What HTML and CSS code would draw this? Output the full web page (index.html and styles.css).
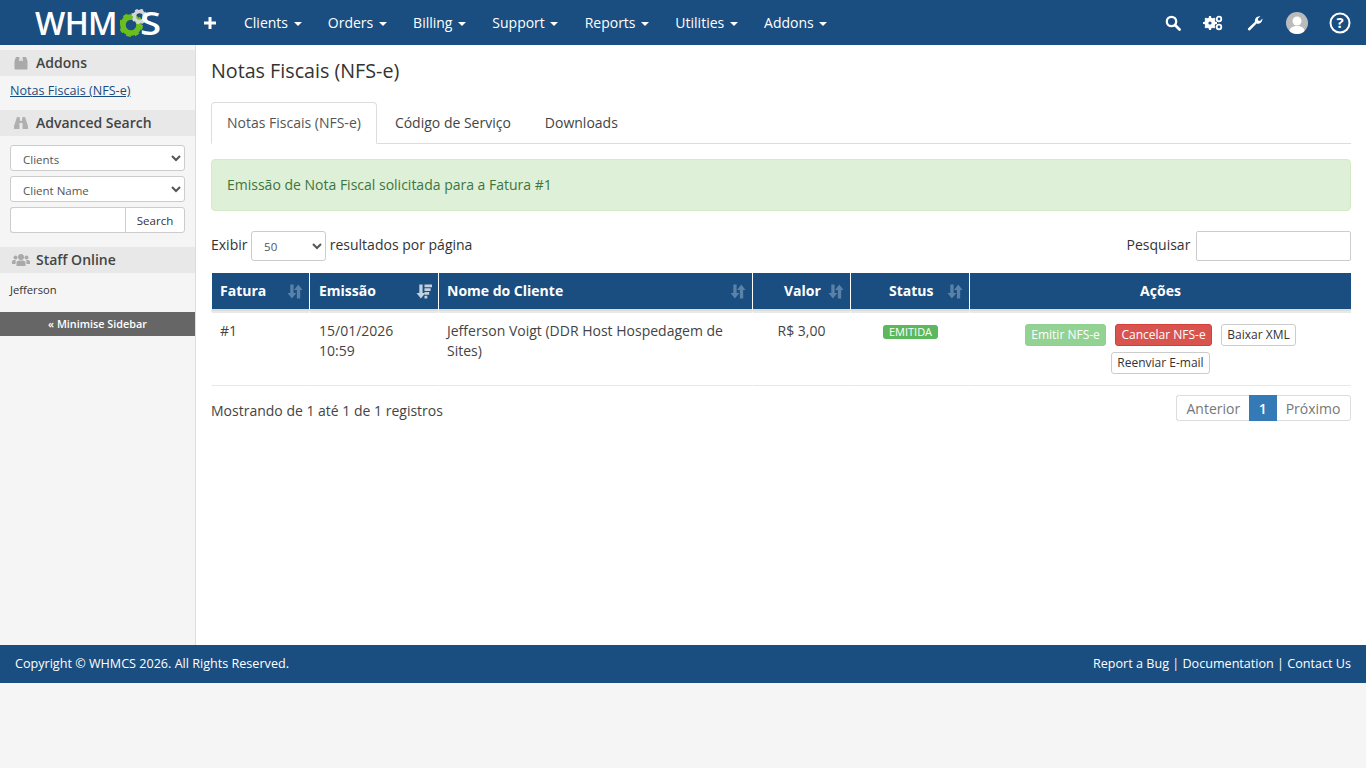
FILE: index.html
```html
<!DOCTYPE html>
<html lang="pt">
<head>
<meta charset="utf-8">
<title>Notas Fiscais (NFS-e)</title>
<link rel="stylesheet" href="styles.css">
</head>
<body>
<header class="topbar">
  <a class="logo" href="#"><span class="logo-whm">WHM</span><svg class="gear" viewBox="0 0 28 28" width="28" height="28"><circle cx="11" cy="16" r="8" fill="none" stroke="#6cbe1e" stroke-width="5.500"/><circle cx="11" cy="16" r="10" fill="none" stroke="#6cbe1e" stroke-width="4" stroke-dasharray="4.300 3.550"/><circle cx="19.500" cy="7.500" r="5" fill="none" stroke="#d5d5d5" stroke-width="3.500"/><circle cx="19.500" cy="7.500" r="6.500" fill="none" stroke="#d5d5d5" stroke-width="2.500" stroke-dasharray="2.800 2.300"/></svg><span class="logo-s">S</span></a>
  <nav class="mainnav">
    <a class="plus" href="#">
      <svg viewBox="0 0 12 12" width="12" height="12"><path d="M4.500 0h3v4.500H12v3H7.500V12h-3V7.500H0v-3h4.500z" fill="#fff"/></svg>
    </a>
    <a href="#">Clients <i class="caret"></i></a>
    <a href="#">Orders <i class="caret"></i></a>
    <a href="#">Billing <i class="caret"></i></a>
    <a href="#">Support <i class="caret"></i></a>
    <a href="#">Reports <i class="caret"></i></a>
    <a href="#">Utilities <i class="caret"></i></a>
    <a href="#">Addons <i class="caret"></i></a>
  </nav>
  <div class="tools">
    <svg class="ic-search" viewBox="0 0 16 16" width="16" height="16"><circle cx="6.500" cy="6.500" r="4.700" fill="none" stroke="#fff" stroke-width="2.300"/><path d="M10 10l4.500 4.500" stroke="#fff" stroke-width="2.800" stroke-linecap="round"/></svg>
    <svg class="ic-cogs" viewBox="0 0 20 16" width="20" height="16"><circle cx="7" cy="8" r="4" fill="none" stroke="#fff" stroke-width="3.200"/><path d="M7 1v14M0 8h14M2.200 3.200l9.600 9.600M11.800 3.200l-9.600 9.600" stroke="#fff" stroke-width="2.200"/><circle cx="7" cy="8" r="1.600" fill="#1a4d80"/><circle cx="16" cy="4" r="2.300" fill="none" stroke="#fff" stroke-width="1.800"/><circle cx="16" cy="12" r="2.300" fill="none" stroke="#fff" stroke-width="1.800"/></svg>
    <svg class="ic-wrench" viewBox="0 0 16 16" width="16" height="16"><path d="M1 13.500L8 6.800C7.300 4 9.500 .8 13.500 1.200L10.800 3.800 11.200 5.500 13 6 15.400 3.400C15.800 7 12.500 9.500 9.600 8.400L3 15.200C2 16 .2 14.500 1 13.500z" fill="#fff"/></svg>
    <span class="avatar"><svg viewBox="0 0 22 22" width="22" height="22"><circle cx="11" cy="9" r="4.500" fill="#fff"/><path d="M3 22c0-6 3-8 8-8s8 2 8 8z" fill="#fff"/></svg></span>
    <svg class="ic-help" viewBox="0 0 22 22" width="22" height="22"><circle cx="11" cy="11" r="9.500" fill="none" stroke="#fff" stroke-width="2"/><text x="11" y="16" text-anchor="middle" class="help-q">?</text></svg>
  </div>
</header>

<div class="layout">
  <aside class="sidebar">
    <h3 class="side-head">
      <svg viewBox="0 0 14 14" width="14" height="14"><path d="M2 1h3.500L5 5H6.500L7 2.500 7.500 5H9L8.500 1H12l1.500 4v7.500c0 .6-.4 1-1 1h-11c-.6 0-1-.4-1-1V5z" fill="#aaa"/></svg>
      Addons
    </h3>
    <div class="side-links"><a href="#">Notas Fiscais (NFS-e)</a></div>
    <h3 class="side-head">
      <svg viewBox="0 0 14 14" width="14" height="14"><path d="M3 1h2.500l.7 4h1.600l.7-4H11l3 9v3H8.500V7h-3v6H0v-3z" fill="#b0b0b0"/></svg>
      Advanced Search
    </h3>
    <form class="side-form">
      <select class="side-select"><option>Clients</option></select>
      <select class="side-select"><option>Client Name</option></select>
      <div class="side-search"><input type="text"><button type="button">Search</button></div>
    </form>
    <h3 class="side-head">
      <svg class="ic-staff" viewBox="0 0 18 14" width="18" height="14"><circle cx="9" cy="4" r="3" fill="#aaa"/><circle cx="3.500" cy="4.500" r="2" fill="#aaa"/><circle cx="14.500" cy="4.500" r="2" fill="#aaa"/><path d="M4.500 13V9.500C4.500 8 6 7.500 9 7.500s4.500.5 4.500 2V13zM0 11V8.500C0 7.500 1 7 3.700 7L3.500 11zM18 11V8.500C18 7.500 17 7 14.300 7l.2 4z" fill="#aaa"/></svg>
      Staff Online
    </h3>
    <div class="staff">Jefferson</div>
    <a class="minimise" href="#">« Minimise Sidebar</a>
  </aside>

  <main class="content">
    <h1>Notas Fiscais (NFS-e)</h1>
    <ul class="tabs">
      <li class="active"><a href="#">Notas Fiscais (NFS-e)</a></li>
      <li><a href="#">Código de Serviço</a></li>
      <li><a href="#">Downloads</a></li>
    </ul>
    <div class="alert">Emissão de Nota Fiscal solicitada para a Fatura #1</div>
    <div class="dt-controls">
      <label class="dt-length">Exibir <select><option>50</option></select> resultados por página</label>
      <label class="dt-filter">Pesquisar <input type="search"></label>
    </div>
    <table class="dt">
      <colgroup>
        <col class="c1"><col class="c2"><col class="c3"><col class="c4"><col class="c5"><col class="c6">
      </colgroup>
      <thead>
        <tr>
          <th><div class="th-in">Fatura<svg class="sort" viewBox="0 0 17 15" width="16" height="15"><path d="M3.500 0H7v9h3l-4.800 6-4.700-6h3zM12 0l4.500 6H14v9h-3.500V6H7.500z" fill="#5a82a8"/></svg></div></th>
          <th class="col-date"><div class="th-in">Emissão<svg class="sort" viewBox="0 0 17 15" width="16" height="15"><path d="M3.500 0H7v9h3l-4.800 6-4.700-6h3z" fill="#c3d0dd"/><path d="M9 0h8v3H9zM9 4h6.500v3H9zM9 8h5v3H9zM9 12h3v3H9z" fill="#c3d0dd"/></svg></div></th>
          <th><div class="th-in">Nome do Cliente<svg class="sort" viewBox="0 0 17 15" width="16" height="15"><path d="M3.500 0H7v9h3l-4.800 6-4.700-6h3zM12 0l4.500 6H14v9h-3.500V6H7.500z" fill="#5a82a8"/></svg></div></th>
          <th><div class="th-in th-right">Valor<svg class="sort" viewBox="0 0 17 15" width="16" height="15"><path d="M3.500 0H7v9h3l-4.800 6-4.700-6h3zM12 0l4.500 6H14v9h-3.500V6H7.500z" fill="#5a82a8"/></svg></div></th>
          <th><div class="th-in th-center">Status<svg class="sort" viewBox="0 0 17 15" width="16" height="15"><path d="M3.500 0H7v9h3l-4.800 6-4.700-6h3zM12 0l4.500 6H14v9h-3.500V6H7.500z" fill="#5a82a8"/></svg></div></th>
          <th class="th-actions">Ações</th>
        </tr>
      </thead>
      <tbody>
        <tr>
          <td>#1</td>
          <td class="col-date">15/01/2026 10:59</td>
          <td>Jefferson Voigt (DDR Host Hospedagem de Sites)</td>
          <td class="td-center">R$ 3,00</td>
          <td class="td-status"><span class="label">EMITIDA</span></td>
          <td class="td-actions">
            <a class="btn btn-green" href="#">Emitir NFS-e</a>
            <a class="btn btn-red" href="#">Cancelar NFS-e</a>
            <a class="btn btn-white" href="#">Baixar XML</a>
            <a class="btn btn-white" href="#">Reenviar E-mail</a>
          </td>
        </tr>
      </tbody>
    </table>
    <div class="dt-foot">
      <div class="dt-info">Mostrando de 1 até 1 de 1 registros</div>
      <ul class="pager">
        <li><a href="#">Anterior</a></li>
        <li class="current"><a href="#">1</a></li>
        <li><a href="#">Próximo</a></li>
      </ul>
    </div>
  </main>
</div>

<footer class="footer">
  <div>Copyright © WHMCS 2026. All Rights Reserved.</div>
  <div><a href="#">Report a Bug</a> | <a href="#">Documentation</a> | <a href="#">Contact Us</a></div>
</footer>
</body>
</html>
```
FILE: styles.css
```css
* { box-sizing: border-box; }
html, body { margin: 0; padding: 0; }
body {
  background: #f5f5f5;
  color: #333;
  font-family: "Open Sans", "Liberation Sans", sans-serif;
  font-size: 14px;
  line-height: 20px;
}
a { text-decoration: none; color: inherit; }

.topbar {
  height: 45px;
  background: #1a4d80;
  display: flex;
  align-items: center;
  color: #fff;
}
.logo {
  width: 203px;
  padding-left: 35px;
  display: flex;
  align-items: center;
  font-size: 32px;
  font-weight: 600;
  line-height: 45px;
  flex: none;
}
.logo-whm { width: 85px; letter-spacing: -0.6px; flex: none; }
.gear { flex: none; margin-top: 1px; }
.logo-s { margin-left: -8px; transform: scaleX(1.2); transform-origin: left center; }
.mainnav { display: flex; align-items: center; height: 45px; }
.mainnav a { font-size: 14px; margin-right: 26.200px; white-space: nowrap; }
.mainnav .plus { display: flex; margin-right: 28px; margin-left: 1px; }
.caret {
  display: inline-block;
  width: 0; height: 0;
  margin-left: 2px;
  vertical-align: middle;
  border-top: 4px solid #fff;
  border-left: 4px solid transparent;
  border-right: 4px solid transparent;
}
.tools {
  margin-left: auto;
  display: flex;
  align-items: center;
  padding-right: 15px;
}
.ic-search { margin-right: 22px; }
.ic-cogs { margin-right: 24px; }
.ic-wrench { margin-right: 23px; }
.avatar {
  width: 22px; height: 22px;
  border-radius: 50%;
  background: #bbb;
  overflow: hidden;
  display: block;
  margin-right: 21px;
}
.avatar svg { display: block; }
.help-q { font: 700 15px "Open Sans", sans-serif; fill: #fff; }

.layout { display: flex; height: 600px; }
.sidebar {
  width: 196px;
  flex: none;
  background: #f5f5f5;
  border-right: 1px solid #ddd;
  padding-top: 5px;
  font-size: 12px;
}
.side-head {
  margin: 0;
  height: 26px;
  background: #e8e8e8;
  color: #444;
  font-size: 14px;
  font-weight: 600;
  line-height: 26px;
  display: flex;
  align-items: center;
  gap: 8px;
  padding-left: 14px;
}
.side-head svg { flex: none; }
.side-head .ic-staff { margin: 0 -2px; }
.side-links { height: 34px; padding: 4px 10px; line-height: 21px; font-size: 12.600px; }
.side-links a { color: #1a4d80; text-decoration: underline; }
.side-form { padding: 9px 10px 14px; display: flex; flex-direction: column; gap: 5px; }
.side-select {
  width: 175px;
  height: 26px;
  padding: 2px 0 0 8px;
  background: #fff;
  border: 1px solid #ccc;
  border-radius: 3px;
  font: 11.500px "Open Sans", sans-serif;
  color: #555;
}
.side-search { display: flex; width: 175px; height: 26px; }
.side-search input {
  width: 115px;
  border: 1px solid #ccc;
  border-right: 0;
  border-radius: 3px 0 0 3px;
  background: #fff;
  padding: 0;
}
.side-search button {
  flex: 1;
  border: 1px solid #ccc;
  border-radius: 0 3px 3px 0;
  background: #fff;
  font: 11.500px "Open Sans", sans-serif;
  color: #333;
  padding: 0;
}
.staff { height: 39px; padding: 7px 10px; font-size: 11.200px; line-height: 20px; }
.minimise {
  display: block;
  height: 24px;
  background: #666;
  color: #fff;
  font-size: 10.800px;
  font-weight: 600;
  line-height: 24px;
  text-align: center;
}

.content {
  flex: 1;
  background: #fff;
  padding: 0 15px;
  min-width: 0;
}
h1 {
  margin: 0;
  padding-top: 12px;
  height: 57px;
  font-size: 19.700px;
  font-weight: 400;
  line-height: 28px;
  color: #333;
}
.tabs {
  list-style: none;
  margin: 0 0 15px;
  padding: 0;
  display: flex;
  height: 42px;
  border-bottom: 1px solid #ddd;
  font-size: 14px;
}
.tabs li { height: 42px; }
.tabs a {
  display: block;
  height: 42px;
  padding: 10px 16px;
  color: #444;
  line-height: 20px;
  border: 1px solid transparent;
}
.tabs .active a {
  padding: 10px 15px;
  background: #fff;
  border: 1px solid #ddd;
  border-bottom-color: #fff;
  border-radius: 4px 4px 0 0;
  color: #555;
  margin-right: 1px;
}
.alert {
  height: 52px;
  padding: 15px;
  line-height: 20px;
  background: #dff0d8;
  border: 1px solid #d6e9c6;
  border-radius: 4px;
  color: #3c763d;
  margin-bottom: 20px;
}
.dt-controls {
  display: flex;
  justify-content: space-between;
  align-items: center;
  height: 30px;
  margin-bottom: 12px;
}
.dt-length select {
  width: 75px;
  height: 30px;
  padding-left: 8px;
  margin: 0;
  vertical-align: middle;
  background: #fff;
  border: 1px solid #ccc;
  border-radius: 3px;
  font: 11.500px "Open Sans", sans-serif;
  color: #555;
}
.dt-filter input {
  width: 155px;
  height: 30px;
  margin-left: 2px;
  border: 1px solid #ccc;
  border-radius: 2px;
  background: #fff;
  vertical-align: middle;
}
.dt {
  width: 1140px;
  table-layout: fixed;
  border-collapse: separate;
  border-spacing: 0;
}
.c1 { width: 98px; }
.c2 { width: 129px; }
.c3 { width: 314px; }
.c4 { width: 98px; }
.c5 { width: 119px; }
.c6 { width: 382px; }
.dt th {
  height: 38px;
  padding: 0;
  background: #1a4d80;
  color: #fff;
  font-size: 14px;
  font-weight: 700;
  text-align: left;
  border-left: 1px solid #fff;
  border-bottom: 2px solid #ddd;
  background-clip: padding-box;
}
.th-in {
  display: flex;
  align-items: center;
  justify-content: space-between;
  padding: 0 6px 0 8px;
}
.col-date .th-in { padding-left: 9px; }
.th-right { padding-left: 31px; }
.th-center { padding-left: 38px; }
.dt .th-actions { text-align: center; }
.sort { flex: none; }
.dt td {
  height: 75px;
  padding: 8px 8px 0;
  vertical-align: top;
  border-left: 1px solid #fff;
  border-bottom: 1px solid #e8e8e8;
  border-top: 2px solid #e8e8e8;
  color: #444;
  line-height: 20px;
}
.dt td.col-date { padding-left: 9px; }
.dt .td-center { text-align: center; }
.dt td.td-actions { text-align: center; padding: 11px 10px 0; }
.dt td.td-status { padding-left: 32px; }
.label {
  display: block;
  width: 55px;
  height: 14px;
  margin-top: 4px;
  background: #5cb85c;
  border-radius: 3px;
  color: #fff;
  font-size: 11px;
  font-weight: 400;
  line-height: 14px;
  text-align: center;
}
.btn {
  display: inline-block;
  height: 22px;
  padding: 0 5px;
  margin: 0 3px 6px;
  border: 1px solid transparent;
  border-radius: 3px;
  font-size: 12px;
  line-height: 20px;
  white-space: nowrap;
}
.btn-green { background: #92d293; border-color: #90d090; color: #fff; }
.btn-red { background: #d9534f; border-color: #d43f3a; color: #fff; }
.btn-white { background: #fff; border-color: #ccc; color: #333; }
.dt-foot {
  display: flex;
  justify-content: space-between;
  align-items: flex-start;
  padding-top: 9px;
}
.dt-info { padding-top: 6px; color: #444; }
.pager { list-style: none; margin: 0; padding: 0; display: flex; height: 26px; }
.pager a {
  display: block;
  height: 26px;
  padding: 2px 9.500px 2px 9px;
  line-height: 21px;
  border: 1px solid #ddd;
  color: #777;
  background: #fff;
}
.pager li:first-child a { padding-right: 8.500px; border-radius: 3px 0 0 3px; border-right: 0; }
.pager li:last-child a { border-radius: 0 3px 3px 0; border-left: 0; }
.pager .current a { padding: 2px 9px; background: #337ab7; border-color: #337ab7; color: #fff; font-weight: 600; }

.footer {
  height: 38px;
  background: #1a4d80;
  color: #fff;
  display: flex;
  justify-content: space-between;
  align-items: center;
  padding: 0 15px;
  font-size: 12.600px;
}
```
